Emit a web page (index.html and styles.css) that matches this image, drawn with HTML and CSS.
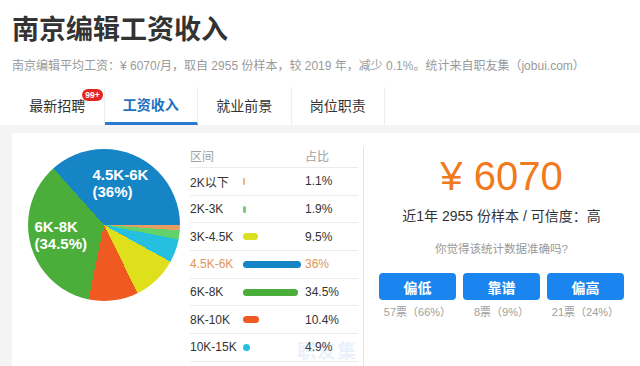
FILE: index.html
```html
<!DOCTYPE html>
<html lang="zh-CN">
<head>
    <meta charset="UTF-8">
    <title>南京编辑工资收入</title>
    <link rel="stylesheet" href="styles.css">
</head>
<body>
    <div class="head">
        <h1 class="title">南京编辑工资收入</h1>
        <p class="sub">南京编辑平均工资：¥ 6070/月，取自 2955 份样本，较 2019 年，减少 0.1%。统计来自职友集（jobui.com）</p>
    </div>

    <div class="tabs">
        <div class="tab">最新招聘<span class="badge">99+</span></div>
        <div class="tab active">工资收入</div>
        <div class="tab">就业前景</div>
        <div class="tab">岗位职责</div>
    </div>

    <div class="main">
        <div class="card">
            <div class="pie">
                <span class="pie-label big">4.5K-6K<br>(36%)</span>
                <span class="pie-label second">6K-8K<br>(34.5%)</span>
            </div>

            <div class="dist">
                <div class="dist-row dist-head"><span>区间</span><span></span><span>占比</span></div>
                <div class="dist-row"><span>2K以下</span><span><i class="bar c-tan" style="width:2px"></i></span><span>1.1%</span></div>
                <div class="dist-row"><span>2K-3K</span><span><i class="bar c-lgreen" style="width:3px"></i></span><span>1.9%</span></div>
                <div class="dist-row"><span>3K-4.5K</span><span><i class="bar c-yellow" style="width:15px"></i></span><span>9.5%</span></div>
                <div class="dist-row hot"><span>4.5K-6K</span><span><i class="bar c-blue" style="width:58px"></i></span><span>36%</span></div>
                <div class="dist-row"><span>6K-8K</span><span><i class="bar c-green" style="width:55px"></i></span><span>34.5%</span></div>
                <div class="dist-row"><span>8K-10K</span><span><i class="bar c-red" style="width:16px"></i></span><span>10.4%</span></div>
                <div class="dist-row"><span>10K-15K</span><span><i class="bar c-cyan" style="width:7px"></i></span><span>4.9%</span></div>
                <span class="mark">职友集</span>
            </div>

            <div class="stat">
                <div class="money">¥ 6070</div>
                <div class="sample">近1年 2955 份样本 / 可信度：高</div>
                <div class="ask">你觉得该统计数据准确吗?</div>
                <div class="votes">
                    <div class="vote"><button class="btn">偏低</button><span>57票（66%）</span></div>
                    <div class="vote"><button class="btn">靠谱</button><span>8票（9%）</span></div>
                    <div class="vote"><button class="btn">偏高</button><span>21票（24%）</span></div>
                </div>
            </div>
        </div>
    </div>
</body>
</html>
```

FILE: styles.css
```css
body {
    margin: 0;
    background: #fff;
    font-family: "Liberation Sans", "Noto Sans CJK SC", sans-serif;
    color: #333;
    height: 366px;
    overflow: hidden;
    display: flex;
    flex-direction: column;
}
.head {
    padding: 15px 12px 0;
}
.title {
    margin: 0;
    font-size: 27px;
    line-height: 30px;
    font-weight: bold;
    color: #333;
}
.sub {
    margin: 13px 0 0;
    font-size: 12px;
    line-height: 16px;
    color: #9a9a9a;
}
.tabs {
    display: flex;
    margin: 13px 0 0 11px;
    height: 38px;
}
.tab {
    position: relative;
    width: 93.5px;
    text-align: center;
    font-size: 14px;
    line-height: 38px;
    color: #333;
    border-right: 1px solid #efefef;
    box-sizing: border-box;
}
.tab.active {
    color: #2470c0;
    font-weight: bold;
    border-bottom: 3px solid #2a7bd4;
    line-height: 37px;
}
.badge {
    position: absolute;
    left: 71px;
    top: 2px;
    width: 21px;
    height: 12px;
    border-radius: 6px;
    background: #e3261f;
    color: #fff;
    font-size: 8.5px;
    font-weight: bold;
    line-height: 12px;
    text-align: center;
}
.main {
    flex: 1;
    background: #f4f4f4;
    padding: 8px 0 0 12px;
    display: flex;
}
.card {
    flex: 1;
    background: #fff;
    display: flex;
    align-items: flex-start;
}
.pie {
    position: relative;
    flex: none;
    width: 152px;
    height: 152px;
    margin: 15.5px 0 0 15.5px;
    border-radius: 50%;
    background: conic-gradient(from 90deg,
        #e89d63 0 1.12%,
        #62d36a 1.12% 3.05%,
        #25bfe0 3.05% 8.04%,
        #dfe01b 8.04% 17.7%,
        #ef5a23 17.7% 28.28%,
        #4bad3a 28.28% 63.38%,
        #1685c6 63.38% 100%);
}
.pie-label {
    position: absolute;
    color: #fff;
    font-weight: bold;
    font-size: 15px;
    line-height: 17.5px;
}
.pie-label.big {
    left: 65px;
    top: 17px;
}
.pie-label.second {
    left: 7px;
    top: 69px;
}
.dist {
    position: relative;
    width: 168px;
    margin: 10px 0 0 10.5px;
}
.dist-row {
    display: grid;
    grid-template-columns: 53px 62px 1fr;
    align-items: center;
    height: 26.7px;
    border-bottom: 1px solid #ececec;
    font-size: 12px;
    color: #333;
}
.dist-head {
    height: 24px;
    color: #a0a0a0;
}
.dist-row.hot {
    color: #e0955a;
}
.bar {
    display: block;
    height: 7px;
    border-radius: 4px;
}
.c-tan { background: #e8b482; }
.c-lgreen { background: #72cf78; }
.c-yellow { background: #d9e01f; }
.c-blue { background: #1685c6; }
.c-green { background: #4bad3a; }
.c-red { background: #ef5a23; }
.c-cyan { background: #25bfe0; }
.mark {
    position: absolute;
    right: 1px;
    top: 193px;
    font-size: 19px;
    font-weight: bold;
    color: rgba(120, 170, 230, 0.18);
    letter-spacing: 1px;
}
.stat {
    flex: 1;
    margin: 14px 0 0 5px;
    border-left: 1px solid #e4e4e4;
    padding: 6px 16px 0 15px;
    text-align: center;
    align-self: stretch;
}
.money {
    font-size: 40px;
    line-height: 46px;
    color: #f07a1e;
}
.sample {
    margin-top: 6.5px;
    font-size: 14px;
    line-height: 20px;
    color: #333;
}
.ask {
    margin-top: 15.5px;
    font-size: 11.5px;
    line-height: 16px;
    color: #999;
}
.votes {
    display: flex;
    gap: 7px;
    margin-top: 16px;
}
.vote {
    flex: 1;
    display: flex;
    flex-direction: column;
    gap: 5px;
}
.btn {
    height: 27px;
    border: 0;
    border-radius: 4px;
    background: #1a85ee;
    color: #fff;
    font-family: inherit;
    font-size: 14px;
    font-weight: bold;
}
.vote span {
    font-size: 11px;
    line-height: 14px;
    color: #a0a0a0;
}
```
